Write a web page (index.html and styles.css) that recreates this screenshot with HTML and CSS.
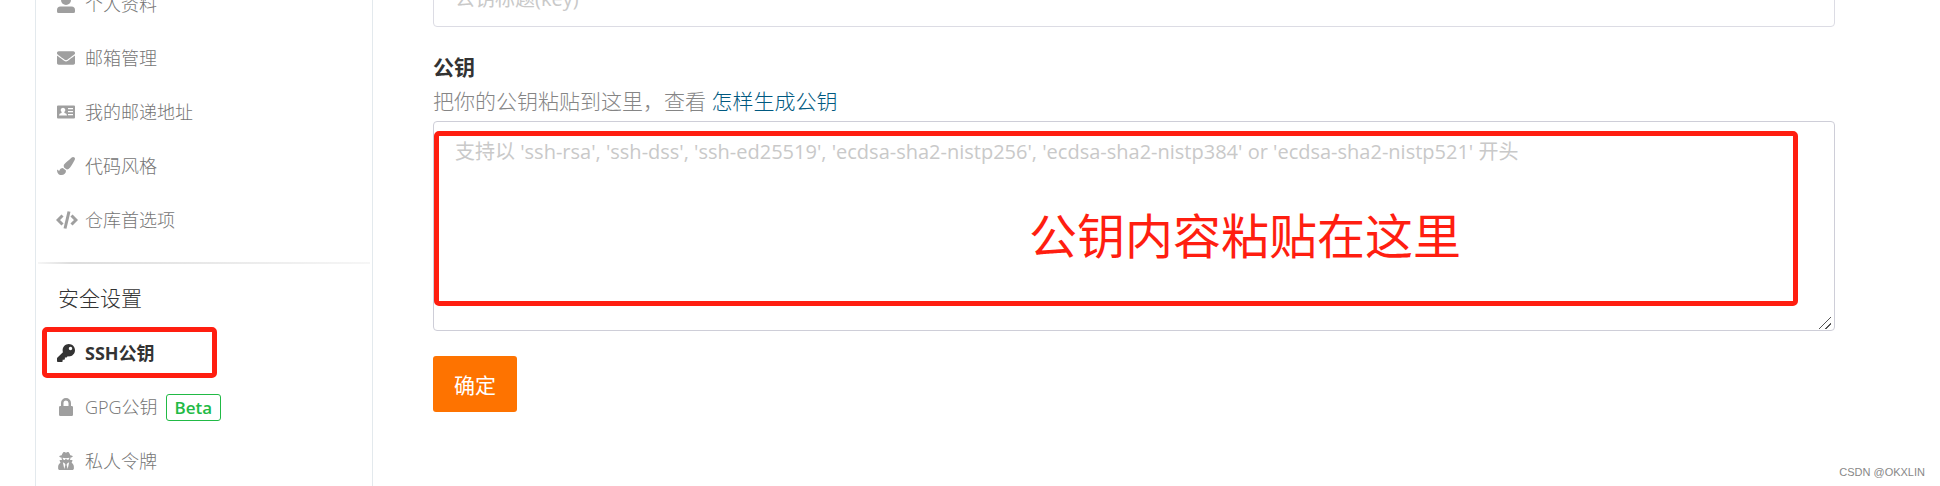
FILE: index.html
```html
<!DOCTYPE html>
<html lang="zh-CN">
<head>
<meta charset="utf-8">
<title>SSH公钥</title>
<link rel="stylesheet" href="styles.css">
</head>
<body>
<div class="page">
  <nav class="sidebar">
    <ul class="menu">
      <li><a class="item" href="#"><svg class="icon" viewBox="0 0 18 18"><circle cx="9" cy="5" r="5"/><path d="M3.500 11.500h11a3.500 3.500 0 0 1 3.500 3.500v1.500a1.500 1.500 0 0 1-1.500 1.500h-15a1.500 1.500 0 0 1-1.500-1.500V15a3.500 3.500 0 0 1 3.500-3.500z"/></svg>个人资料</a></li>
      <li><a class="item" href="#"><svg class="icon" viewBox="0 0 512 512"><path d="M502.300 190.800c3.900-3.100 9.700-.2 9.700 4.700V400c0 26.500-21.500 48-48 48H48c-26.500 0-48-21.500-48-48V195.600c0-5 5.700-7.800 9.700-4.700 22.400 17.400 52.100 39.500 154.100 113.600 21.100 15.400 56.700 47.800 92.200 47.600 35.700.3 72-32.800 92.300-47.600 102-74.100 131.600-96.300 154-113.700zM256 320c23.200.4 56.600-29.200 73.400-41.400 132.700-96.300 142.800-104.700 173.400-128.700 5.800-4.500 9.200-11.500 9.200-18.900v-19c0-26.500-21.500-48-48-48H48c-26.500 0-48 21.500-48 48v19c0 7.400 3.400 14.300 9.200 18.900 30.600 23.900 40.700 32.400 173.400 128.700 16.800 12.200 50.200 41.800 73.400 41.400z"/></svg>邮箱管理</a></li>
      <li><a class="item" href="#"><svg class="icon" viewBox="0 0 18 18"><path fill-rule="evenodd" d="M1 2.500h16a1 1 0 0 1 1 1v11a1 1 0 0 1-1 1H1a1 1 0 0 1-1-1v-11a1 1 0 0 1 1-1zM6 4.700a2.300 2.300 0 0 0-1.300 4.200L4.500 10Q2 10.300 2 12.500h8Q10 10.300 7.500 10l-.2-1.100A2.300 2.300 0 0 0 6 4.700zM11 5v1.200h5V5zM11 8v1.200h5V8zM11 11v1.200h5V11z"/></svg>我的邮递地址</a></li>
      <li><a class="item" href="#"><svg class="icon" viewBox="0 0 512 512"><path d="M167.020 309.340c-40.120 2.580-76.530 17.860-97.190 72.300-2.350 6.210-8 9.980-14.590 9.980-11.110 0-45.460-27.670-55.250-34.350C0 439.620 37.930 512 128 512c75.860 0 128-43.770 128-120.190 0-3.110-.65-6.080-.97-9.130l-88.010-73.340zM457.890 0c-15.160 0-29.370 6.710-40.210 16.450C213.270 199.050 192 203.340 192 257.090c0 13.700 3.250 26.760 8.730 38.700l63.820 53.180c7.210 1.800 14.640 3.030 22.390 3.030 62.110 0 98.110-45.470 211.160-256.460 7.380-14.350 13.900-29.850 13.900-45.990C512 20.640 486 0 457.890 0z"/></svg>代码风格</a></li>
      <li><a class="item" href="#"><svg class="icon icon-code" viewBox="0 0 22 18"><path d="M6.500 4.500L2 9l4.500 4.500M15.500 4.500L20 9l-4.500 4.500M13 .5L9 17.500"/></svg>仓库首选项</a></li>
    </ul>
    <hr class="divider">
    <h2 class="heading">安全设置</h2>
    <ul class="menu">
      <li><a class="item active" href="#"><svg class="icon" viewBox="0 0 512 512"><path d="M512 176c0 97.200-78.800 176-176 176-11.200 0-22.200-1.100-32.800-3.100l-24 27a24 24 0 0 1-18 8.100H224v40c0 13.300-10.700 24-24 24h-40v40c0 13.300-10.700 24-24 24H24c-13.300 0-24-10.700-24-24v-78.100c0-6.300 2.500-12.400 7-16.900l161.800-161.800C163.100 213.800 160 195.300 160 176 160 78.800 238.800 0 336 0c97.500 0 176 78.500 176 176zM336 128c0 26.500 21.500 48 48 48s48-21.500 48-48-21.500-48-48-48-48 21.500-48 48z"/></svg>SSH公钥</a></li>
      <li><a class="item" href="#"><svg class="icon" viewBox="0 0 18 18"><path fill-rule="evenodd" d="M2 9.300A1.300 1.300 0 0 1 3.300 8H4V5a5 5 0 0 1 10 0v3h.7A1.300 1.300 0 0 1 16 9.300v7.400a1.300 1.300 0 0 1-1.300 1.300H3.300A1.300 1.300 0 0 1 2 16.700zM6.500 8h5V5a2.500 2.500 0 0 0-5 0z"/></svg>GPG公钥<span class="badge">Beta</span></a></li>
      <li><a class="item" href="#"><svg class="icon" viewBox="-32 0 512 512"><path d="M383.900 308.300l23.900-62.600c4-10.500-3.700-21.700-15-21.700h-58.500c11-18.900 17.800-40.600 17.800-64v-.3c39.200-7.800 64-19.100 64-31.700 0-13.300-27.300-25.100-70.100-33-9.200-32.800-27-65.800-40.600-82.800-9.500-11.900-25.900-15.600-39.500-8.800l-27.600 13.800c-9 4.500-19.600 4.500-28.600 0L182.100 3.400c-13.600-6.800-30-3.100-39.500 8.800-13.500 17-31.400 50-40.600 82.800-42.700 7.900-70 19.700-70 33 0 12.600 24.800 23.900 64 31.700v.3c0 23.400 6.800 45.100 17.800 64H56.300c-11.500 0-19.200 11.700-14.700 22.300l25.800 60.200C27.300 329.800 0 372.700 0 422.400v44.800C0 491.900 20.100 512 44.800 512h358.400c24.700 0 44.800-20.100 44.800-44.800v-44.800c0-48.400-25.800-90.400-64.100-114.100zM176 480l-41.600-192 49.600 32 24 40-32 120zm96 0l-32-120 24-40 49.600-32L272 480zm41.700-298.500c-3.900 11.900-7 24.600-16.500 33.400-10.100 9.300-48 22.400-64-25-2.800-8.400-15.400-8.400-18.300 0-17 50.200-56 32.400-64 25-9.500-8.800-12.700-21.500-16.500-33.400-.8-2.500-6.300-5.700-6.300-5.800v-10.800c28.300 3.600 61 5.800 96 5.800s67.700-2.100 96-5.800v10.800c-.1.100-5.600 3.200-6.400 5.800z"/></svg>私人令牌</a></li>
    </ul>
    <div class="mark mark-key"></div>
  </nav>
  <main class="content">
    <form class="form">
      <input class="field title" type="text" aria-label="标题" placeholder="公钥标题(key)">
      <label class="label" for="key">公钥</label>
      <p class="hint">把你的公钥粘贴到这里，查看 <a class="link" href="#">怎样生成公钥</a></p>
      <div class="editor">
        <textarea class="field key" id="key" placeholder="支持以 'ssh-rsa', 'ssh-dss', 'ssh-ed25519', 'ecdsa-sha2-nistp256', 'ecdsa-sha2-nistp384' or 'ecdsa-sha2-nistp521' 开头"></textarea>
        <div class="mark mark-editor">公钥内容粘贴在这里</div>
      </div>
      <button class="submit" type="button">确定</button>
    </form>
  </main>
  <div class="watermark">CSDN @OKXLIN</div>
</div>
</body>
</html>
```

FILE: styles.css
```css
* {
  box-sizing: border-box;
}

body {
  margin: 0;
  background: #fff;
  color: #333;
  font-family: "Open Sans", "Noto Sans CJK SC", sans-serif;
  font-size: 21px;
  line-height: 34px;
}

.page {
  position: relative;
  display: flex;
  height: 100vh;
  overflow: hidden;
}

.sidebar {
  position: relative;
  flex: 0 0 338px;
  margin-left: 35px;
  border: solid #e3e9ed;
  border-width: 0 1px;
}

.menu {
  margin: 0;
  padding: 0;
  list-style: none;
}

.menu:first-child {
  margin-top: -23px;
}

.item {
  display: flex;
  align-items: center;
  gap: 10px;
  height: 54px;
  padding-left: 21px;
  color: #757575;
  font-size: 18px;
  font-weight: 300;
  text-decoration: none;
}

.active {
  color: #333;
  font-weight: 700;
}

.icon {
  flex: none;
  width: 18px;
  height: 18px;
  fill: #9f9f9f;
}

.active .icon {
  fill: #333;
}

.icon-code {
  width: 22px;
  margin: 0 -3px 0 -1px;
  fill: none;
  stroke: #9f9f9f;
  stroke-width: 3;
}

.badge {
  height: 27px;
  margin-left: -2px;
  padding: 0 8px;
  border: 1px solid #21ba45;
  border-radius: 3px;
  color: #21ba45;
  font-size: 17px;
  font-weight: 600;
  line-height: 25px;
}

.divider {
  height: 2px;
  margin: 15px 2px 17px;
  border: 0;
  background: linear-gradient(to right, #f6f6f6, #ddd 10%, #f6f6f6);
}

.heading {
  margin: 0 0 11px;
  padding-left: 22px;
  font-size: 21px;
  font-weight: 300;
  line-height: 34px;
}

.content {
  flex: 1;
  padding: 0 105px 0 60px;
}

.form {
  display: flex;
  flex-direction: column;
  align-items: flex-start;
}

.field {
  display: block;
  width: 100%;
  border: 1px solid #dcdce4;
  border-radius: 4px;
  padding: 12px 21px;
  background: #fff;
  color: #333;
  font-family: inherit;
  font-size: 20px;
  line-height: 30px;
}

.field::placeholder {
  color: #c9c9c9;
}

.title {
  height: 58px;
  margin-top: -31px;
}

.label {
  margin-top: 23px;
  font-weight: 700;
}

.hint {
  margin: 0 0 3px;
  color: #858585;
  font-weight: 300;
}

.link {
  color: #005980;
  text-decoration: none;
}

.editor {
  position: relative;
  width: 100%;
}

.key {
  height: 210px;
  padding-top: 15px;
  border-color: #ceced8;
}

.key::-webkit-resizer {
  background: linear-gradient(135deg, transparent 46%, #555 46% 54%, transparent 54% 73%, #555 73% 81%, transparent 81%) 0 2px / 12px 12px no-repeat;
}

.mark {
  position: absolute;
  border: 5px solid #ff1e10;
  border-radius: 5px;
  color: #ff1e10;
  pointer-events: none;
}

.mark-key {
  top: 327px;
  left: 6px;
  width: 175px;
  height: 51px;
}

.mark-editor {
  inset: 10px 37px 25px 1px;
  padding: 40px 0 0 258px;
  font-size: 48px;
  line-height: 120px;
  text-align: center;
}

.submit {
  height: 56px;
  margin-top: 25px;
  padding: 0 21px;
  border: 0;
  border-radius: 3px;
  background: #fe7300;
  color: #fff;
  font-family: inherit;
  font-size: 21px;
}

.watermark {
  position: absolute;
  right: 15px;
  bottom: 6px;
  color: #888;
  font-family: "Liberation Sans", sans-serif;
  font-size: 11px;
  line-height: 16px;
}
```
